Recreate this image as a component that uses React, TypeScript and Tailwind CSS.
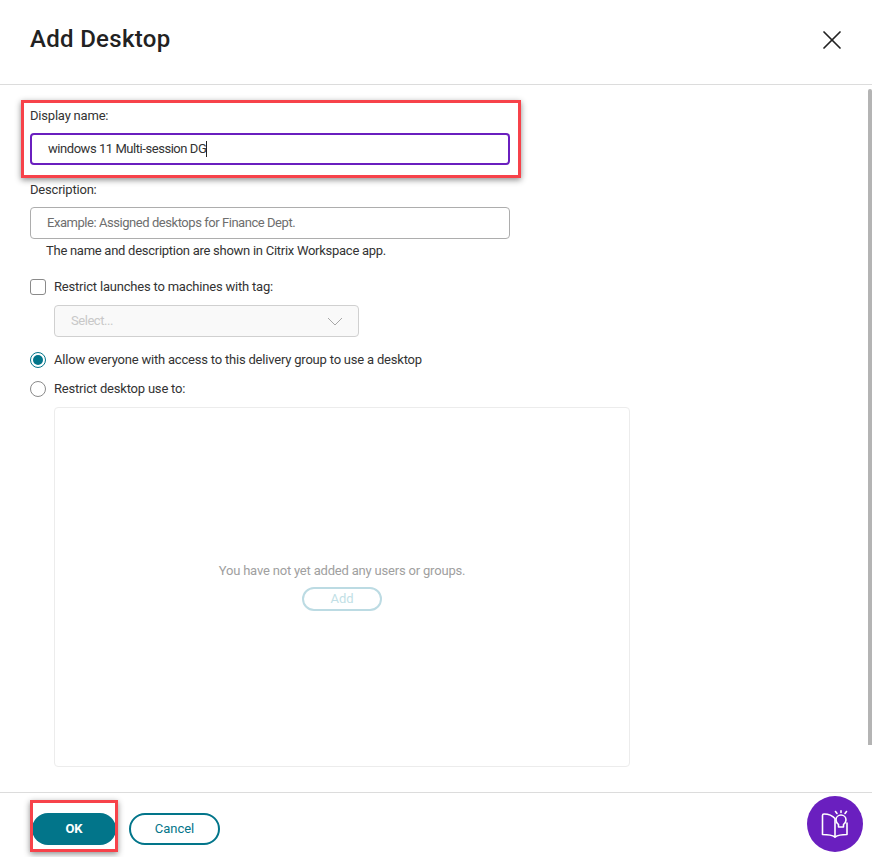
import React from 'react';
import {X} from 'lucide-react';

const labelCls = 'text-[13px] leading-[18px] text-[#333] tracking-[-0.2px]';
const inputText = 'text-[13px] tracking-[-0.45px]';

const HelpIcon = () => (
    <svg width="28" height="28" viewBox="0 0 28 28" fill="none" stroke="white" strokeWidth="1.6" strokeLinecap="round" strokeLinejoin="round">
        <path d="M14 27C11 25 7 24.500 1.500 24.500V5.500C1.500 4.500 2 4 3 4C7.500 4 11 5 14 8.500V27Z"/>
        <path d="M14 27C17 25 21 24.500 26 24.500V13"/>
        <path d="M17.500 14.500C16 13.200 15 11.800 15 10C15 7.200 17.200 5 20 5C22.800 5 25 7.200 25 10C25 11.800 24 13.200 22.500 14.500V17H17.500Z"/>
        <path d="M14.500 1.500L16 3.500M20 0.800V2.500M25.500 1.500L24 3.500"/>
    </svg>
);

export default function App() {
    return (
        <div className="relative w-[872px] h-[857px] overflow-hidden bg-white flex flex-col font-['Roboto',sans-serif]">
            {/* Header */}
            <div className="h-[85px] shrink-0 border-b border-[#dcdcdc] flex items-start justify-between pl-[30px] pr-[24px]">
                <h1 className="mt-[23px] text-[24px] leading-[32px] tracking-[0.3px] font-medium text-[#222]">Add Desktop</h1>
                <button className="mt-[24px] text-[#222]"><X size={32} strokeWidth={1.3}/></button>
            </div>

            {/* Body */}
            <div className="relative flex-1 pl-[30px] pt-[22px]">
                <div className={labelCls}>Display name:</div>
                <div className={`${inputText} mt-[8px] w-[480px] h-[32px] border-2 border-[#6a1fbf] rounded-[4px] flex items-center pl-[16px] text-[#333]`}>
                    windows 11 Multi-session DG<span className="w-px h-[16px] bg-[#222]"></span>
                </div>

                <div className={`${labelCls} mt-[16px]`}>Description:</div>
                <div className={`${inputText} mt-[8px] w-[480px] h-[32px] border border-[#adadad] rounded-[4px] flex items-center pl-[16px] text-[#6e6e6e]`}>
                    Example: Assigned desktops for Finance Dept.
                </div>
                <div className="text-[13px] leading-[18px] text-[#333] tracking-[-0.27px] mt-[3px] pl-[16px]">The name and description are shown in Citrix Workspace app.</div>

                <div className="mt-[19px] flex items-center gap-[8px] h-[16px]">
                    <span className="w-[16px] h-[16px] border border-[#8a8a8a] rounded-[3px]"></span>
                    <span className={labelCls}>Restrict launches to machines with tag:</span>
                </div>
                <div className={`${inputText} mt-[10px] ml-[24px] w-[305px] h-[32px] border border-[#d0d0d0] rounded-[4px] bg-[#f9f9f9] flex items-center justify-between pl-[16px] pr-[15px] text-[#c8c8c8]`}>
                    Select...
                    <svg width="16" height="9" viewBox="0 0 16 9" fill="none" stroke="#a8a8a8" strokeWidth="1"><path d="M1 1L8 8L15 1"/></svg>
                </div>

                <div className="mt-[15px] flex items-center gap-[8px] h-[16px]">
                    <span className="w-[16px] h-[16px] rounded-full border border-[#02758a] flex items-center justify-center">
                        <span className="w-[10px] h-[10px] rounded-full bg-[#02758a]"></span>
                    </span>
                    <span className={labelCls}>Allow everyone with access to this delivery group to use a desktop</span>
                </div>
                <div className="mt-[13px] flex items-center gap-[8px] h-[16px]">
                    <span className="w-[16px] h-[16px] rounded-full border border-[#8a8a8a]"></span>
                    <span className={labelCls}>Restrict desktop use to:</span>
                </div>

                <div className="mt-[10px] ml-[24px] w-[576px] h-[360px] border border-[#ececec] rounded-[4px] flex flex-col items-center pt-[154px]">
                    <div className="text-[13px] leading-[18px] tracking-[-0.19px] text-[#a0a0a0]">You have not yet added any users or groups.</div>
                    <button className="mt-[7px] w-[80px] h-[24px] border-2 border-[#bcdbe3] rounded-full flex items-center justify-center text-[13px] text-[#c2dfe6]">Add</button>
                </div>

                {/* Scrollbar thumb */}
                <div className="absolute right-0 top-[4px] w-[4px] h-[656px] bg-[#b4b4b4] rounded-t-[2px]"></div>
            </div>

            {/* Footer */}
            <div className="h-[65px] shrink-0 border-t border-[#dcdcdc] flex items-start pl-[32px] pt-[20px] gap-[13px]">
                <button className="w-[84px] h-[32px] rounded-full bg-[#02758a] text-white text-[13px] font-bold">OK</button>
                <button className="w-[91px] h-[32px] rounded-full border-2 border-[#02758a] text-[#02758a] text-[13px]">Cancel</button>
            </div>

            {/* Help button */}
            <div className="absolute left-[807px] top-[796px] w-[56px] h-[56px] rounded-full bg-[#6a1fbf] flex items-center justify-center">
                <HelpIcon/>
            </div>

            {/* Red annotation boxes */}
            <div className="absolute left-[21px] top-[100px] w-[500px] h-[78px] border-[3px] border-[#f7424a] shadow-[0_2px_6px_rgba(0,0,0,0.45)]"></div>
            <div className="absolute left-[30px] top-[800px] w-[88px] h-[52px] border-[3px] border-[#f7424a] shadow-[0_2px_6px_rgba(0,0,0,0.45)]"></div>
        </div>
    );
}
